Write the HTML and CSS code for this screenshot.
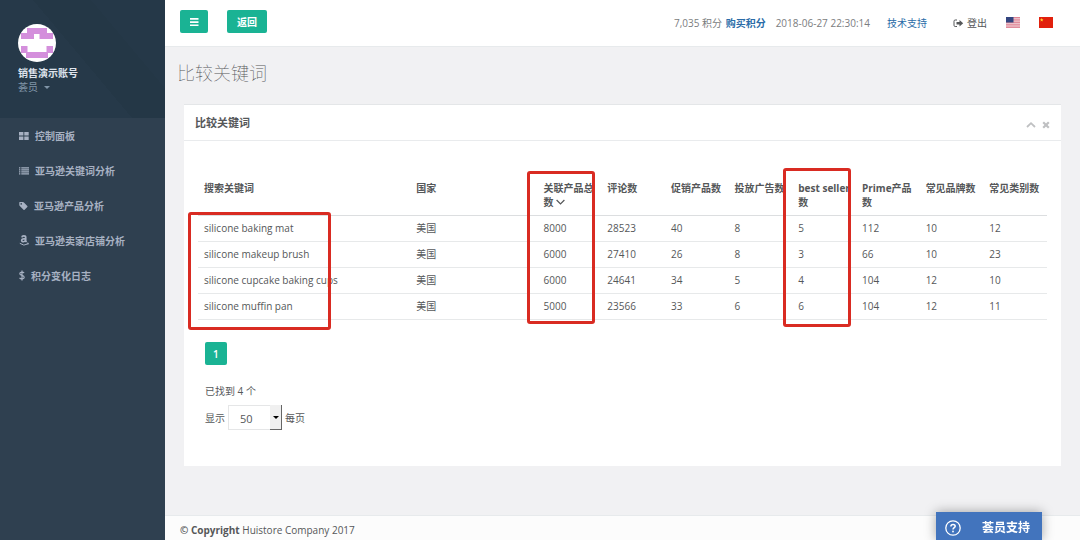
FILE: index.html
```html
<!DOCTYPE html>
<html lang="zh-CN">
<head>
<meta charset="utf-8">
<title>比较关键词</title>
<link rel="stylesheet" href="styles.css">
</head>
<body>
<div class="app">
  <aside class="sidebar">
    <div class="profile">
      <svg class="avatar" viewBox="0 0 38 38" aria-hidden="true">
        <defs><clipPath id="round"><circle cx="19" cy="19" r="19"/></clipPath></defs>
        <g clip-path="url(#round)">
          <rect width="38" height="38" fill="#fff"/>
          <path fill="#d48fdc" d="M9 4h20v5h6v6H21.500V10h-5.500v5H3V9h6zM3 22h6.500v6h19v-6H35v7h-5v5H8v-5H3z"/>
        </g>
      </svg>
      <strong class="name">销售演示账号</strong>
      <button class="role" type="button">荟员 <span class="caret"></span></button>
    </div>
    <nav class="menu">
      <a href="#"><svg width="10" height="10" viewBox="0 0 10 10"><path d="M0 1h4.400v3.500H0zM5.300 1h4.400v3.500H5.300zM0 5.400h4.400V9H0zM5.300 5.400h4.400V9H5.300z"/></svg>控制面板</a>
      <a href="#"><svg width="10" height="10" viewBox="0 0 11 10"><path d="M0 1h1.500v1.300H0zM2.500 1H11v1.300H2.500zM0 3.200h1.500v1.300H0zM2.500 3.200H11v1.300H2.500zM0 5.400h1.500v1.300H0zM2.500 5.400H11v1.300H2.500zM0 7.600h1.500v1.300H0zM2.500 7.600H11v1.300H2.500z"/></svg>亚马逊关键词分析</a>
      <a href="#"><svg width="9" height="10" viewBox="0 0 9 10"><path d="M.7 1H4q.5 0 .9.400l3.400 3.500q.5.600 0 1.100L5.600 8.800q-.6.500-1.100 0L.8 5.100Q.3 4.600.3 4V1.500Q.3 1 .7 1z"/><circle cx="2.200" cy="2.900" r=".8" fill="#2f4050"/></svg>亚马逊产品分析</a>
      <a href="#"><svg width="10" height="11" viewBox="0 0 10 11"><g fill="none" stroke="currentColor"><path stroke-width="1.700" d="M2.900 2.300C3.100.5 6.700.4 6.700 2.500v3.500l.8 1M6.700 3.700C4.300 3.600 2.700 4 2.700 5.400 2.700 7.400 6.300 7.200 6.700 4.700"/><path d="M.8 8.300q4.100 3.300 8 .6M7.800 8.200h1.600L9 9.500"/></g></svg>亚马逊卖家店铺分析</a>
      <a href="#"><svg width="6" height="11" viewBox="0 0 6 11"><path fill="none" stroke="currentColor" stroke-width="1.200" d="M5.100 3C4.100 1.700.8 1.700.8 3.700c0 2 4.400 1.300 4.400 3.500C5.200 9.200 1.800 9.300.5 7.800M3 .5v10"/></svg>积分变化日志</a>
    </nav>
  </aside>

  <div class="page">
    <header class="topbar">
      <button class="btn" type="button" aria-label="菜单"><svg width="10" height="10" viewBox="0 0 10 10"><path fill="currentColor" d="M1 1h8.500v1.700H1zM1 4.200h8.500v1.700H1zM1 7.400h8.500v1.700H1z"/></svg></button>
      <button class="btn back" type="button">返回</button>
      <div class="tools">
        <span class="points">7,035 积分 <a class="buy" href="#">购买积分</a></span>
        <time class="clock">2018-06-27 22:30:14</time>
        <a class="help" href="#">技术支持</a>
        <a class="logout" href="#"><svg width="11" height="9" viewBox="0 0 11 9"><path fill="none" stroke="currentColor" d="M4 1H2.200Q1 1 1 2.200v4.100Q1 7.500 2.200 7.500H4"/><path fill="currentColor" d="M3.500 3h3V1l3.700 3.300L6.500 7.600v-2h-3z"/></svg>登出</a>
        <a class="flag" href="#" aria-label="English"><svg width="14" height="11" viewBox="0 0 14 11"><rect width="14" height="11" fill="#f4d9df"/><path stroke="#d97587" stroke-width=".85" d="M0 .5h14M0 2.200h14M0 3.900h14M0 5.600h14M0 7.300h14M0 9h14M0 10.600h14"/><path fill="#33457f" d="M0 0h7.500v5.500H0z"/></svg></a>
        <a class="flag" href="#" aria-label="中文"><svg width="14" height="11" viewBox="0 0 14 11"><rect width="14" height="11" fill="#e1200d"/><path fill="#ffd72e" d="M2.700 1l.5 1.200 1.300.1-1 .8.300 1.300-1.100-.7-1.100.7.300-1.300-1-.8 1.300-.1z"/></svg></a>
      </div>
    </header>

    <h1 class="title">比较关键词</h1>

    <main class="content">
      <section class="panel">
        <div class="panel-head">
          <h2>比较关键词</h2>
          <div class="panel-tools">
            <button type="button" aria-label="折叠"><svg width="10" height="8" viewBox="0 0 10 8"><path fill="none" stroke="currentColor" stroke-width="1.800" d="M1 6l4-3.800L9 6"/></svg></button>
            <button type="button" aria-label="关闭"><svg width="8" height="8" viewBox="0 0 8 8"><path stroke="currentColor" stroke-width="2.200" d="M1.200 1.200l5.600 5.600M6.800 1.200L1.200 6.800"/></svg></button>
          </div>
        </div>
        <div class="panel-body">
          <div class="table-wrap">
            <table class="grid">
              <thead>
                <tr><th class="wide">搜索关键词</th><th class="mid">国家</th><th>关联产品总数 <svg width="9" height="7" viewBox="0 0 9 7"><path fill="none" stroke="currentColor" stroke-width="1.200" d="M.6 1l3.900 4L8.400 1"/></svg></th><th>评论数</th><th>促销产品数</th><th>投放广告数</th><th>best seller数</th><th>Prime产品数</th><th>常见品牌数</th><th>常见类别数</th></tr>
              </thead>
              <tbody>
                <tr><td>silicone baking mat</td><td>美国</td><td>8000</td><td>28523</td><td>40</td><td>8</td><td>5</td><td>112</td><td>10</td><td>12</td></tr>
                <tr><td>silicone makeup brush</td><td>美国</td><td>6000</td><td>27410</td><td>26</td><td>8</td><td>3</td><td>66</td><td>10</td><td>23</td></tr>
                <tr><td>silicone cupcake baking cups</td><td>美国</td><td>6000</td><td>24641</td><td>34</td><td>5</td><td>4</td><td>104</td><td>12</td><td>10</td></tr>
                <tr><td>silicone muffin pan</td><td>美国</td><td>5000</td><td>23566</td><td>33</td><td>6</td><td>6</td><td>104</td><td>12</td><td>11</td></tr>
              </tbody>
            </table>
            <span class="mark mark-keywords"></span>
            <span class="mark mark-total"></span>
            <span class="mark mark-seller"></span>
          </div>
          <div class="below">
            <button class="btn pager" type="button">1</button>
            <p class="found">已找到 4 个</p>
            <div class="size">
              <label for="size">显示</label>
              <span class="select"><select id="size"><option>50</option></select></span>
              <span>每页</span>
            </div>
          </div>
        </div>
      </section>
    </main>

    <footer class="footer"><strong>© Copyright</strong> Huistore Company 2017</footer>
  </div>
</div>
<button class="support" type="button">
  <svg width="16" height="16" viewBox="0 0 16 16"><g fill="none" stroke="currentColor" stroke-width="1.300"><circle cx="8" cy="8" r="7.200"/><path stroke-width="1.500" d="M5.900 6.500c0-2.900 4.300-2.600 4.300-.3C10.200 7.600 8 7.800 8 9.500"/></g><circle cx="8" cy="11.500" r=".9" fill="currentColor"/></svg>
  <span>荟员支持</span>
</button>
</body>
</html>
```
FILE: styles.css
```css
* { box-sizing: border-box; }
body {
  margin: 0;
  overflow: hidden;
  background: #f1f1f3;
  color: #555759;
  font: 10px/14px "Open Sans", "Noto Sans CJK SC", sans-serif;
}
a { color: inherit; text-decoration: none; }
button { font: inherit; color: inherit; border: 0; background: none; padding: 0; }
svg { flex: none; }

.app { display: flex; min-height: 100vh; }

.sidebar { flex: none; width: 165px; background: #2f4050; color: #a7b1c2; }
.profile {
  display: flex;
  flex-direction: column;
  align-items: flex-start;
  height: 118px;
  padding: 24px 18px;
  background: linear-gradient(50deg, #263949 0 50%, #243746 50% 72%, #253848 72%);
}
.avatar { width: 38px; height: 38px; margin-bottom: 5px; }
.name { color: #dfe4ed; line-height: 13px; }
.role { display: flex; align-items: center; gap: 6px; color: #8095a8; line-height: 14px; }
.caret { border: 3px solid transparent; border-top-color: currentColor; border-bottom: 0; }
.menu a { display: flex; align-items: center; gap: 6px; height: 35px; padding-left: 19px; font-weight: 600; }
.menu svg { fill: currentColor; }

.page { flex: 1; min-width: 0; display: flex; flex-direction: column; }
.topbar {
  display: flex;
  align-items: flex-start;
  gap: 19px;
  height: 47px;
  padding: 10px 27px 0 15px;
  background: #fff;
  border-bottom: 1px solid #e7eaec;
}
.btn {
  display: flex;
  align-items: center;
  justify-content: center;
  height: 23px;
  padding: 0 9px;
  border-radius: 2px;
  background: #1ab394;
  color: #fff;
  font-weight: 600;
}
.back { padding: 0 10px; }
.pager { padding: 0 8px; }
.tools { flex: 1; display: flex; justify-content: flex-end; align-items: center; height: 25px; color: #7b7d80; white-space: nowrap; }
.buy { margin-left: 1px; color: #2a6ca8; font-weight: 700; }
.clock { margin-left: 10px; }
.help { margin-left: 17px; color: #2a6ca8; }
.logout { display: flex; align-items: center; gap: 3px; margin: 1px 0 0 26px; color: #555759; }
.flag { display: flex; margin-left: 19px; }

.title { margin: 14px 12px 19px; font-size: 18px; line-height: 24px; font-weight: 100; color: #55575a; }

.content { flex: 1; padding: 0 19px 48px; }
.panel { background: #fff; border-top: 1px solid #e4e6e8; }
.panel-head {
  display: flex;
  align-items: center;
  justify-content: space-between;
  height: 36px;
  padding: 0 11px;
  border-bottom: 1px solid #e9ebed;
}
.panel-head h2 { margin: 0; font-size: 11px; font-weight: 600; }
.panel-tools { display: flex; gap: 6px; padding-top: 4px; color: #bfc0c2; }
.panel-tools button { display: flex; align-items: center; }
.panel-body { padding: 34px 14px 36px; }

.table-wrap { position: relative; }
.grid { width: 100%; border-collapse: collapse; table-layout: fixed; }
.grid th, .grid td { padding: 6px; text-align: left; vertical-align: top; border-bottom: 1px solid #e7e9ea; }
.grid th { font-weight: 700; border-bottom-color: #dcdee0; }
.grid td { padding-top: 5px; }
.grid .wide { width: 25%; }
.grid .mid { width: 15%; }

.mark { position: absolute; border: 3px solid #d92b22; border-radius: 3px; }
.mark-keywords { left: -10px; top: 37px; width: 143px; height: 118px; }
.mark-total { left: 329px; top: -4px; width: 68px; height: 153px; }
.mark-seller { left: 585px; top: -7px; width: 68px; height: 159px; }

.below { padding: 22px 7px 0; }
.found { margin: 19px 0 7px; }
.size { display: flex; align-items: center; gap: 3px; }
.select { position: relative; display: flex; }
.select select {
  appearance: none;
  width: 54px;
  height: 25px;
  padding: 2px 11px 0;
  border: 1px solid #e5e6e7;
  border-radius: 0;
  background: #fff;
  color: inherit;
  font: inherit;
  font-size: 11px;
}
.select::before {
  content: "";
  position: absolute;
  inset: 0 0 0 auto;
  width: 11px;
  background: #f0f0f0;
  border: solid #666;
  border-width: 0 1px 1px 0;
  pointer-events: none;
}
.select::after {
  content: "";
  position: absolute;
  right: 3px;
  top: 11px;
  border: 3px solid transparent;
  border-top-color: #000;
  border-bottom: 0;
  pointer-events: none;
}

.footer { padding: 7px 15px 3px; background: #fcfcfc; border-top: 1px solid #e7eaec; }

.support {
  position: fixed;
  right: 38px;
  bottom: 0;
  display: flex;
  align-items: center;
  gap: 21px;
  height: 28px;
  padding: 4px 12px 0 9px;
  background: #4274bd;
  color: #fff;
  font-size: 12px;
  font-weight: 600;
  box-shadow: 0 0 12px rgba(0, 0, 0, .35);
}
```
